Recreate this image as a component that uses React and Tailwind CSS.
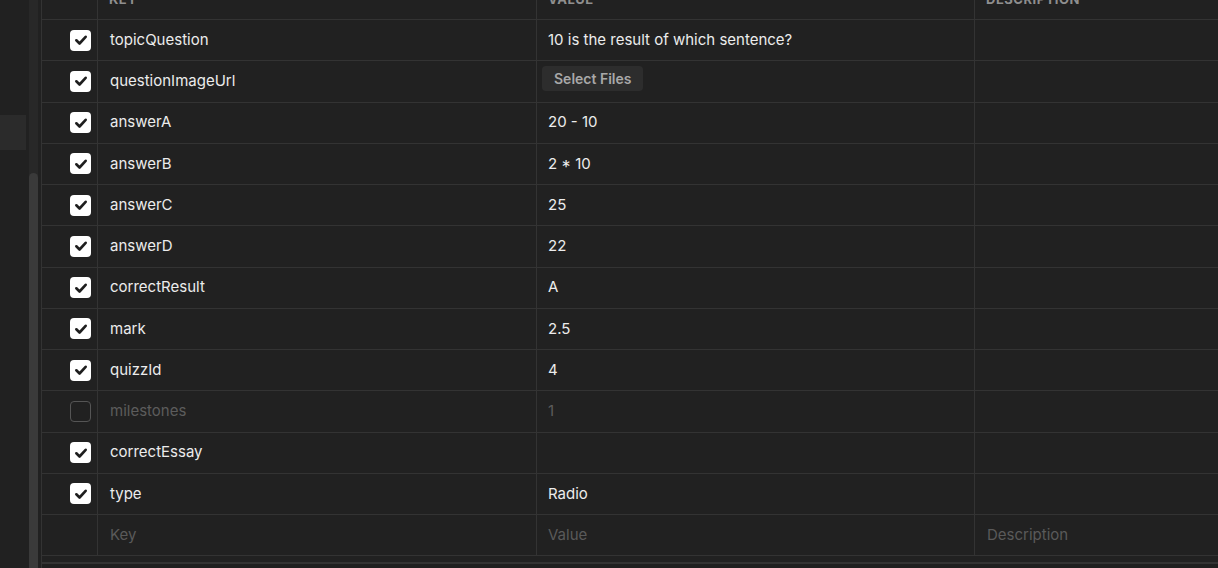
import React from 'react';

const rows = [
  { key: 'topicQuestion', value: '10 is the result of which sentence?', on: true },
  { key: 'questionImageUrl', file: true, on: true },
  { key: 'answerA', value: '20 - 10', on: true },
  { key: 'answerB', value: '2 * 10', on: true },
  { key: 'answerC', value: '25', on: true },
  { key: 'answerD', value: '22', on: true },
  { key: 'correctResult', value: 'A', on: true },
  { key: 'mark', value: '2.5', on: true },
  { key: 'quizzId', value: '4', on: true },
  { key: 'milestones', value: '1', on: false },
  { key: 'correctEssay', value: '', on: true },
  { key: 'type', value: 'Radio', on: true },
];

function Check({ on }) {
  if (!on) {
    return <div className="w-[21px] h-[21px] rounded-[4px] border border-[#555555]" />;
  }
  return (
    <div className="w-[21px] h-[21px] rounded-[4px] bg-white flex items-center justify-center">
      <svg width="14" height="14" viewBox="0 0 24 24" fill="none">
        <polyline points="4,12.5 9.5,18 20,6.5" stroke="#1e1e1e" strokeWidth="4.5" strokeLinecap="round" strokeLinejoin="round" />
      </svg>
    </div>
  );
}

function Row({ row }) {
  const dim = !row.on;
  return (
    <div className="flex h-[41.25px] border-b border-[#333333]">
      <div className="w-[56px] shrink-0 border-r border-[#333333] flex items-center justify-end pr-[6px]">
        <Check on={row.on} />
      </div>
      <div className={`w-[439px] shrink-0 border-r border-[#333333] flex items-center pl-[12px] ${dim ? 'text-[#5c5c5c]' : 'text-[#ececec]'}`}>
        {row.key}
      </div>
      <div className={`w-[438px] shrink-0 border-r border-[#333333] flex ${row.file ? 'items-start pl-[5px] pt-[5px]' : 'items-center pl-[11px]'} ${dim ? 'text-[#5c5c5c]' : 'text-[#ececec]'}`}>
        {row.file ? (
          <button className="h-[25px] px-[12px] rounded-[4px] bg-[#2d2d2d] text-[#a8a8a8] text-[14px] font-semibold">Select Files</button>
        ) : (
          row.value
        )}
      </div>
      <div className="flex-1" />
    </div>
  );
}

export default function App() {
  return (
    <div className="w-[1218px] h-[568px] overflow-hidden bg-[#212121] flex text-[15px]" style={{ fontFamily: 'Inter, "Noto Sans", sans-serif' }}>
      <div className="w-[29px] shrink-0 flex flex-col">
        <div className="h-[115px]" />
        <div className="h-[35px] w-[26px] bg-[#2b2b2b]" />
      </div>
      <div className="w-[9px] shrink-0 bg-[#282828] flex flex-col">
        <div className="h-[173px]" />
        <div className="flex-1 bg-[#3a3a3a] rounded-t-[5px]" />
      </div>
      <div className="w-[3px] shrink-0" />
      <div className="flex-1 border-l border-[#333333] flex flex-col">
        <div className="flex h-[40px] -mt-[20px] border-b border-[#333333] text-[13px] font-bold text-[#8f8f8f] uppercase tracking-[0.04em]">
          <div className="w-[56px] shrink-0 border-r border-[#333333]" />
          <div className="w-[439px] shrink-0 border-r border-[#333333] flex items-center pl-[11px]">Key</div>
          <div className="w-[438px] shrink-0 border-r border-[#333333] flex items-center pl-[11px]">Value</div>
          <div className="flex-1 flex items-center pl-[11px]">Description</div>
        </div>
        {rows.map((r) => (
          <Row key={r.key} row={r} />
        ))}
        <div className="flex h-[41.25px] border-b border-[#333333] text-[#5a5a5a]">
          <div className="w-[56px] shrink-0 border-r border-[#333333]" />
          <div className="w-[439px] shrink-0 border-r border-[#333333] flex items-center pl-[12px]">Key</div>
          <div className="w-[438px] shrink-0 border-r border-[#333333] flex items-center pl-[11px]">Value</div>
          <div className="flex-1 flex items-center pl-[12px]">Description</div>
        </div>
        <div className="h-[6px]" />
        <div className="h-[2px] bg-[#333333]" />
        <div className="flex-1 bg-[#1f1f1f]" />
      </div>
    </div>
  );
}
